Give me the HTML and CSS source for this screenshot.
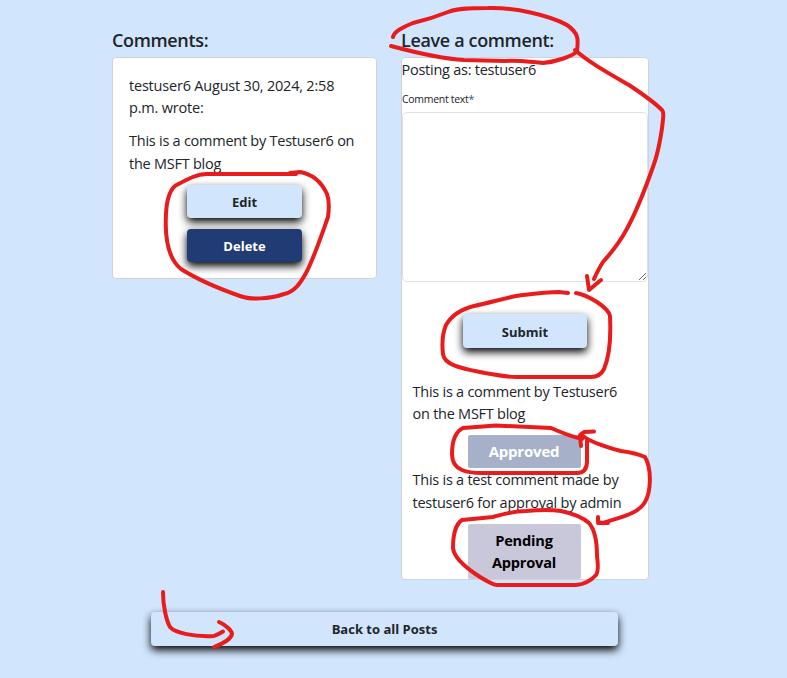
FILE: index.html
```html
<!DOCTYPE html>
<html lang="en">
<head>
<meta charset="utf-8">
<title>Comments</title>
<link rel="stylesheet" href="styles.css">
</head>
<body>
<main class="page">
  <div class="columns">
    <section class="comments">
      <h3>Comments:</h3>
      <article class="card comment">
        <p class="meta">testuser6 August 30, 2024, 2:58<br>p.m. wrote:</p>
        <p>This is a comment by Testuser6 on<br>the MSFT blog</p>
        <button class="btn">Edit</button>
        <button class="btn btn-delete">Delete</button>
      </article>
    </section>
    <section class="leave">
      <h3>Leave a comment:</h3>
      <div class="card form-card">
        <p class="posting">Posting as: testuser6</p>
        <label for="body">Comment text<span class="required">*</span></label>
        <textarea id="body"></textarea>
        <button class="btn btn-submit">Submit</button>
        <p class="own own-first">This is a comment by Testuser6<br>on the MSFT blog</p>
        <div class="status approved">Approved</div>
        <p class="own">This is a test comment made by<br>testuser6 for approval by admin</p>
        <div class="status pending">Pending<br>Approval</div>
      </div>
    </section>
  </div>
  <a class="btn btn-back">Back to all Posts</a>
</main>
<svg class="ink" viewBox="0 0 787 678" width="787" height="678" aria-hidden="true">
  <path d="M393 37C394 32 401 28 413 23C426 20 438 16 448 12C458 8 473 8 488 8C515 7 551 16 567 25C580 34 578 41 577 51C574 56 555 62 543 63C530 62 519 60 505 61L464 60C443 59 421 54 391 46"/>
  <path d="M575 50C590 63 608 73 629 85C644 95 654 102 662 110Q664 112 663 119C662 132 658 153 654 164C646 187 637 212 624 234C617 246 611 253 603 262Q599 268 594 279M587 276L589 290L601 280"/>
  <path d="M290 173L300 172C312 174 321 181 327 194Q330 202 328 217C323 231 314 258 306 273C300 284 294 292 284 294C270 299 251 300 240 296C220 289 195 278 181 269C166 257 165 232 166 214Q167 193 175 186C186 180 196 174 207 174L296 174"/>
  <path d="M568 293L559 292C545 292 532 294 516 296C502 299 488 303 474 306C458 310 450 318 446 325Q441 337 443 354C444 366 466 369 485 373Q507 377 516 377L591 377Q600 377 604 369C610 355 611 336 610 316Q609 310 597 302Q584 294 576 293"/>
  <path d="M582 439C569 436 560 432 551 428L496 425.500L463 428C455 432 452 441 452 454Q452 466 462 470Q469 473 482 473L577 473Q587 473 587 461L587 440M581 446L580 435L584 432L594 431.500M583 436C590 442 606 447 621 451Q636 453 645 457C652 469 651 492 645 502C638 514 621 517 603 523L598 522L598 517M598 523L608 523"/>
  <path d="M526 511C513 511 504 514 493 517L462 520C456 524 453 535 453 548C454 558 466 568 480 577Q493 585 497 585L576 585Q588 584 596 575Q599 571 597 556C597 544 595 530 589 523Q580 515 561 511Q547 509 526 511"/>
  <path d="M163 592C163 605 166 620 170 627C175 633 194 637 214 636Q219 634 223 631.500M219 622C226 625 232 631 232 634C231 639 222 644 214 647"/>
</svg>
</body>
</html>
```

FILE: styles.css
```css
* { box-sizing: border-box; }
body {
  margin: 0;
  height: 678px;
  overflow: hidden;
  background: #d1e5fd;
  color: #212529;
  font: 14.5px/22.5px "Open Sans", "Noto Sans", sans-serif;
}
.page { padding: 29px 138px 0 112px; }
.columns { display: flex; gap: 24px; align-items: flex-start; }
.comments { width: 265px; }
.leave { width: 248px; }
h3 { margin: 0 0 5px; font-size: 18px; line-height: 23px; font-weight: 600; letter-spacing: -.35px; }
p { margin: 0; white-space: nowrap; letter-spacing: -.25px; }
.card { background: #fff; border: 1px solid #cfd3d8; border-radius: 4px; display: flex; flex-direction: column; }
.comment { height: 222px; padding: 17px 16px; }
.meta { margin-bottom: 11px; line-height: 22px; letter-spacing: -.2px; }
.btn {
  display: flex;
  align-items: center;
  justify-content: center;
  align-self: center;
  width: 115px;
  height: 33px;
  flex: none;
  margin-top: 10px;
  padding: 0;
  border: 0;
  border-radius: 4px;
  background: #d1e5fd;
  color: #212529;
  font: 700 13px/20px "Open Sans", "Noto Sans", sans-serif;
  box-shadow: 0 4px 8px #000;
}
.btn-delete { background: #213b74; color: #fff; margin-top: 11px; }
.form-card { height: 523px; }
.posting { height: 24px; line-height: 24px; margin-left: -.5px; }
label { margin-top: 7px; font-size: 10.5px; line-height: 20px; letter-spacing: -.3px; }
.required { color: #1c5870; }
textarea { width: 246px; height: 170px; margin-top: 3px; flex: none; border: 1px solid #dee2e6; border-radius: 5px; background: #fff; resize: both; }
.btn-submit { width: 124px; height: 34px; margin: 32px 0 33px; padding-top: 1px; }
.own { padding-left: 10.500px; line-height: 22.5px; }
.own-first { line-height: 22px; margin-bottom: 1px; }
.status { width: 113px; align-self: center; position: relative; left: -1px; text-align: center; font-size: 14.6px; font-weight: 700; line-height: 22px; letter-spacing: -.2px; border-radius: 2px; }
.approved { height: 33px; margin: 9px 0 1px; padding-top: 5px; background: #a6b0c8; color: #fff; font-size: 15px; }
.pending { height: 55px; margin-top: 10px; padding-top: 5px; background: #c9c7da; color: #000; }
.btn-back { width: 467px; height: 34px; margin: 32px 0 0 39px; }
.ink { position: absolute; top: 0; left: 0; fill: none; stroke: #e81c1c; stroke-width: 4; stroke-linecap: round; stroke-linejoin: round; pointer-events: none; }
```
